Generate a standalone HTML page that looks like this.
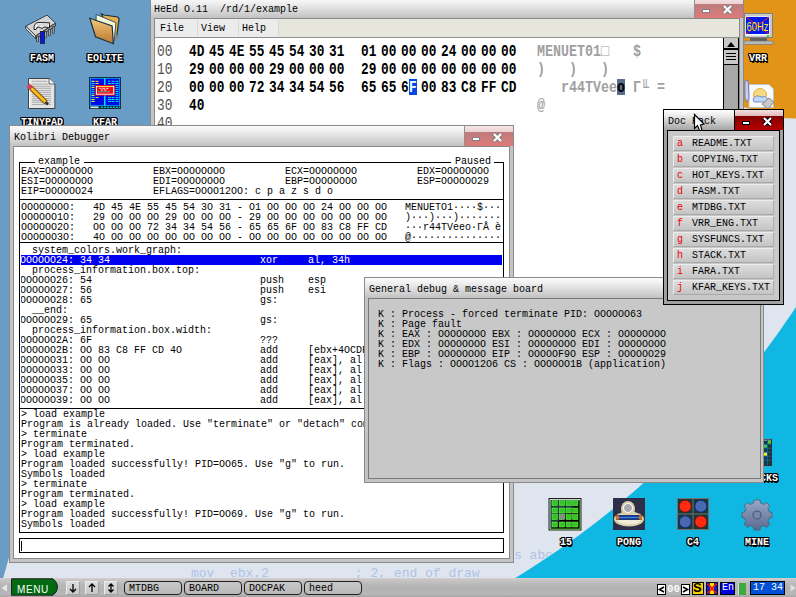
<!DOCTYPE html><html><head><meta charset="utf-8"><style>
html,body{margin:0;padding:0;width:796px;height:597px;overflow:hidden;position:relative;background:#6a9dc6}
div{box-sizing:border-box}
svg{position:absolute;overflow:visible}
.t{position:absolute;white-space:pre;font-family:"Liberation Mono",monospace;font-size:10px;line-height:12px;color:#000}
.lbl{position:absolute;white-space:pre;font-family:"Liberation Mono",monospace;font-weight:bold;font-size:10px;line-height:12px;color:#fff;
 text-shadow:1px 0 0 #000,-1px 0 0 #000,0 1px 0 #000,0 -1px 0 #000,1px 1px 0 #000,-1px -1px 0 #000,1px -1px 0 #000,-1px 1px 0 #000,1px 2px 0 #000}
</style></head><body>
<svg style="left:0;top:0" width="796" height="597" viewBox="0 0 796 597">
<rect x="0" y="0" width="796" height="597" fill="#10b7e3"/>
<circle cx="47.3" cy="-187.5" r="897.3" fill="#dfe5ef"/>
<polygon points="-20,-10 215,-10 160,126 9.4,556 3.5,577 -2,597 -20,597" fill="#6a9dc6"/>
<polygon points="700,-10 900,-10 900,123 783,118 700,95" fill="#e29418"/>
</svg>
<div class="t" style="left:191px;top:567px;font-size:13px;line-height:13px;color:#aec3e6;clip-path:circle(897.3px at -143.7px -754.5px)">mov  ebx,2           ; 2, end of draw</div>
<div class="t" style="left:514px;top:549px;font-size:13px;line-height:13px;color:#aec3e6;clip-path:circle(897.3px at -466.7px -736.5px)">s abo</div>
<svg style="left:22px;top:12px" width="38" height="34" viewBox="0 0 38 34">
<polygon points="3.7,14.2 25,3.1 33.6,11.1 13.7,23.9" fill="#d4d4d4" stroke="#303030" stroke-width="0.9"/>
<polygon points="3.7,14.2 13.7,23.9 13.7,26.5 3.7,16.8" fill="#f4f4f4" stroke="#303030" stroke-width="0.9"/>
<polygon points="13.7,23.9 33.6,11.1 33.6,14 13.7,26.5" fill="#9a9a9a" stroke="#303030" stroke-width="0.9"/>
<path d="M15.6 25 V29 M19.5 23 V27 M23.4 20.5 V25 M27.4 18 V23 M31.3 15.5 V20.5" stroke="#303030" stroke-width="2.6" stroke-linecap="round"/>
<path d="M15.6 25 V29 M19.5 23 V27 M23.4 20.5 V25 M27.4 18 V23 M31.3 15.5 V20.5" stroke="#a8a8a8" stroke-width="1.2" stroke-linecap="round"/>
<path d="M12 17.5 Q11.5 10.5 17 10.5 L27.5 10.8 L27.5 15.5 L22 15 L20 16.5 L17 15 Q14.5 14.5 14 17.5 Z" fill="#f4f4f4" stroke="#202020" stroke-width="1"/><path d="M15 13 L26 13" stroke="#b0b0b0" stroke-width="0.8"/>
<rect x="18.5" y="19.5" width="4" height="12" fill="#0818e8" stroke="#202020" stroke-width="0.8"/>
</svg>
<div class="lbl" style="left:-18px;top:53px;width:120px;text-align:center;font-size:10px">FASM</div>
<svg style="left:86px;top:10px" width="38" height="38" viewBox="0 0 38 38">
<path d="M15.3 3.8 L18 5 L31.8 7 L33.1 8.9 L30.6 26.7 L27 29 Z" fill="#e8b050" stroke="#183040" stroke-width="1.2"/>
<path d="M10.2 4.5 L29.9 12.7 L28 31.8 L10 24 Z" fill="#fafaf0" stroke="#183040" stroke-width="0.8"/>
<path d="M11 8 L29 15" stroke="#e8f8a0" stroke-width="1.2"/>
<path d="M28.6 24.2 L34.4 27 L29 30 Z" fill="#8a8a8a"/>
<defs><linearGradient id="fg" x1="0" y1="0" x2="0" y2="1"><stop offset="0" stop-color="#f4c878"/><stop offset="1" stop-color="#b87830"/></linearGradient></defs>
<path d="M3.8 8.3 L26.1 15.9 L27.4 33.7 L9.5 26.7 Z" fill="url(#fg)" stroke="#183040" stroke-width="1.2"/>
</svg>
<div class="lbl" style="left:45px;top:53px;width:120px;text-align:center;font-size:10px">EOLITE</div>
<svg style="left:24px;top:74px" width="36" height="38" viewBox="0 0 36 38">
<path d="M4.5 4.5 H25.1 L30.9 10 V34.5 H4.5 Z" fill="#e4e4e4" stroke="#404040" stroke-width="1"/>
<path d="M25.1 4.5 V10 H30.9" fill="#fafafa" stroke="#404040" stroke-width="0.8"/>
<path d="M5.5 5 V34" stroke="#fff" stroke-width="1"/>
<path d="M8 7.3 H23 M8 10.2 H24 M8 12.4 H27 M8 14.3 H27 M8 16.5 H27 M8 18.4 H27 M8 20.4 H27 M8 22.3 H27 M8 24.5 H27 M8 26.4 H27 M8 28.3 H27 M8 30.5 H27" stroke="#a8a8a8" stroke-width="0.9"/>
<path d="M5.5 12.5 L22 28.5" stroke="#8a4a00" stroke-width="5"/>
<path d="M5.5 12.5 L22 28.5" stroke="#f8c020" stroke-width="3"/>
<path d="M4 11 L7.5 14.5" stroke="#d84060" stroke-width="4.5"/>
<path d="M21.5 28 L24 30.5" stroke="#303030" stroke-width="2.5"/>
</svg>
<div class="lbl" style="left:-18px;top:117px;width:120px;text-align:center;font-size:10px">TINYPAD</div>
<svg style="left:89px;top:77px" width="32" height="32" viewBox="0 0 32 32">
<rect x="0" y="0" width="32" height="32" fill="#103040"/>
<rect x="1" y="1" width="30" height="28" fill="#00e0f0"/>
<rect x="1.6" y="1.6" width="13.4" height="26.8" fill="#0008e8"/>
<rect x="16.5" y="1.6" width="13.9" height="26.8" fill="#0008e8"/>
<path d="M2.5 4.3h3M2.5 6.5h3M2.5 8.5h3M2.5 10.4h3M2.5 12.6h3M2.5 14.5h3M2.5 16.4h3M2.5 18.3h3M2.5 20.6h3M2.5 22.5h3M2.5 24.4h3" stroke="#00e0f0" stroke-width="1" />
<path d="M2.5 4.3h3M6.5 4.3h3M6.5 6.5h3M2.5 10.4h3M2.5 18.3h3M6.5 20.6h3M2.5 22.5h3M2.5 24.4h3" stroke="#f8e020" stroke-width="1"/>
<path d="M19 4.3h2M22.5 4.3h3M26.5 4.3h3M19 6.5h3M22.5 6.5h3M26.5 6.5h3M26.5 8.5h3M26.5 10.4h3M26.5 12.6h3M26.5 14.5h3M26.5 16.4h3M26.5 18.3h3M19 20.6h3M22.5 20.6h3M26.5 20.6h3M19 22.5h3M22.5 22.5h3M26.5 22.5h3M19 24.4h3M22.5 24.4h3M26.5 24.4h3" stroke="#00e0f0" stroke-width="1"/>
<rect x="6.2" y="8.1" width="19.8" height="10.5" fill="#f01010"/>
<rect x="7.5" y="9.5" width="17.2" height="7.7" fill="none" stroke="#fff" stroke-width="0.9"/>
<path d="M8 9.5h16" stroke="#f8d020" stroke-width="0.8"/>
<path d="M10.5 11.3h2M13.5 11.3h2.5M17 11.3h2.5M12 13h2M15 13h2.5M9.5 14.7h3M13.5 14.7h3M17.5 14.7h3" stroke="#fff" stroke-width="0.9"/>
<path d="M9.5 14.7h3M13.5 14.7h3M17.5 14.7h3" stroke="#207070" stroke-width="0.9"/>
<rect x="1" y="29" width="30" height="2.5" fill="#103040"/>
<path d="M12 30.3h19" stroke="#00e0f0" stroke-dasharray="2,1" stroke-width="1"/>
<path d="M1.5 30.3h8" stroke="#e0f0f0" stroke-width="1.6"/>
</svg>
<div class="lbl" style="left:45px;top:117px;width:120px;text-align:center;font-size:10px">KFAR</div>
<svg style="left:744px;top:13px" width="30" height="32" viewBox="0 0 30 32">
<rect x="0.5" y="0.5" width="28" height="24" fill="#c8c8c8" stroke="#808080"/>
<rect x="1.5" y="3.5" width="24" height="19" fill="#fff"/>
<rect x="2" y="4" width="23" height="17" fill="#0018f0"/>
<path d="M2 4 L25 21 M25 4 L2 21" stroke="#f02020" stroke-width="1"/>
<text x="2.5" y="17.5" font-family="Liberation Sans" font-size="12" fill="#f8e820" textLength="22" lengthAdjust="spacingAndGlyphs">60Hz</text>
<rect x="23" y="22" width="2" height="2" fill="#20e020"/>
<rect x="6" y="25" width="17" height="3" fill="#606060"/>
<rect x="0" y="28" width="29" height="3.5" fill="#b8b8b8" stroke="#707070" stroke-width="0.6"/>
</svg>
<div class="lbl" style="left:698px;top:53px;width:120px;text-align:center;font-size:10px">VRR</div>
<svg style="left:744px;top:80px" width="30" height="30" viewBox="0 0 30 30">
<path d="M5 4.5 H25 L29.5 9 V27.5 H5 Z" fill="#fafafa" stroke="#c0c0c0"/>
<circle cx="16" cy="15" r="6.5" fill="#f8d880" stroke="#e0b040"/>
<path d="M9 19 Q12 14 17 17 Q21 15 24 19 L23 22 L10 22 Z" fill="#c0d8f8" stroke="#6080c0" stroke-width="0.8"/>
<path d="M18 24 L25 18 L30 22 L24 29 Z" fill="#c8c8c8" stroke="#888"/>
<path d="M1 1 L4 0.5 L5 18 L3 22 L1 18 Z" fill="#c8d0f8" stroke="#5070d0" stroke-width="0.8"/>
</svg>
<svg style="left:748px;top:439px" width="24" height="27" viewBox="0 0 24 27">
<rect x="0.5" y="0.5" width="23" height="26" fill="#183838" stroke="#402828" stroke-width="1"/>
<path d="M1 1.2 H23" stroke="#d0d0d0" stroke-width="0.8"/>
<path d="M1 5.2h22M1 9.2h22M1 13.2h22M1 17.2h22M1 21.2h22M7.5 1v25M15.5 1v25M19.5 1v25" stroke="#0868b8" stroke-width="0.9"/>
<rect x="20" y="1.7" width="3" height="3" fill="#40d030"/>
<rect x="16" y="5.7" width="3" height="3" fill="#40d030"/>
<rect x="16" y="13.7" width="3" height="3" fill="#f8f020"/>
</svg>
<div class="lbl" style="left:700px;top:473px;width:120px;text-align:center;font-size:10px">BLOCKS</div>
<svg style="left:548px;top:498px" width="34" height="33" viewBox="0 0 34 33">
<rect x="1" y="0.5" width="32" height="31.5" fill="#184038" stroke="#202020"/>
<rect x="2" y="1.5" width="30" height="29.5" fill="none" stroke="#f0f0f0" stroke-width="0.8"/>
<path d="M2.5 31 H32 V2" stroke="#40b020" stroke-width="1"/>
<rect x="4.0" y="2.7" width="5.3" height="5" fill="#30c820" stroke="#80ff60" stroke-width="0.5"/><rect x="11.3" y="2.7" width="5.3" height="5" fill="#30c820" stroke="#80ff60" stroke-width="0.5"/><rect x="18.0" y="2.7" width="5.3" height="5" fill="#30c820" stroke="#80ff60" stroke-width="0.5"/><rect x="24.6" y="2.7" width="5.3" height="5" fill="#30c820" stroke="#80ff60" stroke-width="0.5"/><rect x="4.0" y="10.0" width="5.3" height="5" fill="#30c820" stroke="#80ff60" stroke-width="0.5"/><rect x="11.3" y="10.0" width="5.3" height="5" fill="#30c820" stroke="#80ff60" stroke-width="0.5"/><rect x="18.0" y="10.0" width="5.3" height="5" fill="#30c820" stroke="#80ff60" stroke-width="0.5"/><rect x="24.6" y="10.0" width="5.3" height="5" fill="#30c820" stroke="#80ff60" stroke-width="0.5"/><rect x="4.0" y="16.6" width="5.3" height="5" fill="#30c820" stroke="#80ff60" stroke-width="0.5"/><rect x="11.3" y="16.6" width="5.3" height="5" fill="#888" stroke="#80ff60" stroke-width="0.5"/><rect x="18.0" y="16.6" width="5.3" height="5" fill="#30c820" stroke="#80ff60" stroke-width="0.5"/><rect x="24.6" y="16.6" width="5.3" height="5" fill="#30c820" stroke="#80ff60" stroke-width="0.5"/><rect x="4.0" y="24.0" width="5.3" height="5" fill="#30c820" stroke="#80ff60" stroke-width="0.5"/><rect x="11.3" y="24.0" width="5.3" height="5" fill="#30c820" stroke="#80ff60" stroke-width="0.5"/><rect x="18.0" y="24.0" width="5.3" height="5" fill="#30c820" stroke="#80ff60" stroke-width="0.5"/><rect x="24.6" y="24.0" width="5.3" height="5" fill="#30c820" stroke="#80ff60" stroke-width="0.5"/>
</svg>
<div class="lbl" style="left:506px;top:537px;width:120px;text-align:center;font-size:10px">15</div>
<svg style="left:613px;top:498px" width="32" height="32" viewBox="0 0 32 32">
<rect x="0" y="0" width="32" height="32" fill="#2e2e48"/>
<ellipse cx="16" cy="21" rx="15" ry="7.5" fill="#d8d0a8"/>
<ellipse cx="16" cy="21" rx="12.5" ry="5.5" fill="#f0ecd8"/>
<ellipse cx="15" cy="11" rx="7" ry="8" fill="#d8d0a8"/>
<circle cx="15" cy="10" r="4.5" fill="#a8a8b0" stroke="#fff" stroke-width="1"/>
<rect x="3.5" y="17.5" width="25" height="4" fill="#1840a8" stroke="#102060" stroke-width="0.8"/>
<path d="M5 19.5 H27" stroke="#40a0d0" stroke-width="0.8"/>
<ellipse cx="4.5" cy="19.5" rx="1.8" ry="2.5" fill="#d07020"/><ellipse cx="27.5" cy="19.5" rx="1.8" ry="2.5" fill="#d07020"/>
</svg>
<div class="lbl" style="left:569px;top:537px;width:120px;text-align:center;font-size:10px">PONG</div>
<svg style="left:677px;top:498px" width="33" height="33" viewBox="0 0 33 33">
<rect x="0" y="0" width="32" height="32" fill="#707070"/>
<rect x="1" y="1" width="14.5" height="14.5" fill="#1a3838"/><rect x="16.5" y="1" width="14.5" height="14.5" fill="#1a3838"/>
<rect x="1" y="16.5" width="14.5" height="14.5" fill="#1a3838"/><rect x="16.5" y="16.5" width="14.5" height="14.5" fill="#1a3838"/>
<circle cx="8.2" cy="8.2" r="6" fill="#ff2a10" stroke="#701010" stroke-width="0.8"/><circle cx="23.8" cy="8.2" r="6" fill="#4868b0" stroke="#102080" stroke-width="0.8"/>
<circle cx="8.2" cy="23.8" r="6" fill="#4868b0" stroke="#102080" stroke-width="0.8"/><circle cx="23.8" cy="23.8" r="6" fill="#ff2a10" stroke="#701010" stroke-width="0.8"/>
</svg>
<div class="lbl" style="left:633px;top:537px;width:120px;text-align:center;font-size:10px">C4</div>
<svg style="left:741px;top:499px" width="32" height="32" viewBox="0 0 32 32">
<defs><linearGradient id="gg" x1="0" y1="0" x2="0" y2="1"><stop offset="0" stop-color="#98a8c8"/><stop offset="1" stop-color="#5a6a90"/></linearGradient></defs>
<path d="M13 1 H19 L19.5 4 L23 5.5 L25.5 3.5 L29 7 L27 9.5 L28.5 13 L31 13.5 V18.5 L28.5 19 L27 22.5 L29 25 L25.5 28.5 L23 26.5 L19.5 28 L19 31 H13 L12.5 28 L9 26.5 L6.5 28.5 L3 25 L5 22.5 L3.5 19 L1 18.5 V13.5 L3.5 13 L5 9.5 L3 7 L6.5 3.5 L9 5.5 L12.5 4 Z" fill="url(#gg)" stroke="#505a70" stroke-width="0.8"/>
<circle cx="16" cy="16" r="4" fill="#7888a8" stroke="#48587a" stroke-width="1.2"/>
</svg>
<div class="lbl" style="left:697px;top:537px;width:120px;text-align:center;font-size:10px">MINE</div>
<div style="position:absolute;left:150px;top:-3px;width:594px;height:424px;border:1px solid #8a8a8a;background:#c4c4c4"></div>
<div style="position:absolute;left:151px;top:-2px;width:592px;height:20px;background:linear-gradient(#fbfbfb,#f0f0f0 25%,#c2c2c2)"></div>
<div style="position:absolute;left:694px;top:-2px;width:49px;height:20px;background:linear-gradient(#f6e6e6 0,#ecd2d2 6px,#bc7c7c 6px,#e07a7a);border-left:1px solid #909090"></div>
<div style="position:absolute;left:154px;top:18px;width:586px;height:399px;border:1px solid #888;background:#fff"></div>
<div class="t" style="left:154px;top:4px;">HeEd O.11  /rd/1/example</div>
<div style="position:absolute;left:702px;top:9px;width:8px;height:4px;background:#fff;border:1px solid #808080"></div>
<svg style="left:722px;top:4px" width="11" height="11" viewBox="0 0 11 11"><path d="M2 2 L9 9 M9 2 L2 9" stroke="#808080" stroke-width="4.2"/><path d="M2 2 L9 9 M9 2 L2 9" stroke="#fff" stroke-width="2.2"/></svg>
<div style="position:absolute;left:155px;top:19px;width:584px;height:19px;background:#e6e6dc;border-bottom:1px solid #909090"></div>
<div style="position:absolute;left:155px;top:19px;width:123px;height:18px;background:#ececec"></div>
<div style="position:absolute;left:197px;top:20px;width:1px;height:16px;background:#d8d8d0"></div>
<div style="position:absolute;left:238px;top:20px;width:1px;height:16px;background:#d8d8d0"></div>
<div style="position:absolute;left:278px;top:20px;width:1px;height:16px;background:#d8d8d0"></div>
<div class="t" style="left:160px;top:23px;">File</div>
<div class="t" style="left:201px;top:23px;">View</div>
<div class="t" style="left:242px;top:23px;">Help</div>
<div style="position:absolute;left:155px;top:38px;width:584px;height:378px;background:#fff"></div>
<div style="position:absolute;left:723px;top:38px;width:16px;height:80px;background:#a8a8a8;border-left:1px solid #000;border-right:1px solid #000"></div>
<div style="position:absolute;left:724px;top:38px;width:14px;height:11px;background:#c8c8c8;border-bottom:1px solid #000"></div>
<svg style="left:725px;top:40px" width="12" height="8" viewBox="0 0 12 8"><path d="M2 7 L6 2 L10 7 Z" fill="#000"/></svg>
<div style="position:absolute;left:724px;top:49px;width:14px;height:16px;background:#c8c8c8;border-top:1px solid #000;border-bottom:1px solid #000"></div>
<div style="position:absolute;left:726px;top:53px;width:10px;height:1px;background:#000"></div>
<div style="position:absolute;left:726px;top:56px;width:10px;height:1px;background:#000"></div>
<div style="position:absolute;left:726px;top:59px;width:10px;height:1px;background:#000"></div>
<div class="t" style="left:157px;top:44px;font-family:Liberation Mono,monospace;font-weight:bold;font-size:16px;line-height:16px;transform:scaleX(0.8);transform-origin:0 0;font-weight:normal;color:#505050">00</div>
<div class="t" style="left:189px;top:44px;font-family:Liberation Mono,monospace;font-weight:bold;font-size:16px;line-height:16px;transform:scaleX(0.8);transform-origin:0 0;">4D</div>
<div class="t" style="left:209px;top:44px;font-family:Liberation Mono,monospace;font-weight:bold;font-size:16px;line-height:16px;transform:scaleX(0.8);transform-origin:0 0;">45</div>
<div class="t" style="left:229px;top:44px;font-family:Liberation Mono,monospace;font-weight:bold;font-size:16px;line-height:16px;transform:scaleX(0.8);transform-origin:0 0;">4E</div>
<div class="t" style="left:249px;top:44px;font-family:Liberation Mono,monospace;font-weight:bold;font-size:16px;line-height:16px;transform:scaleX(0.8);transform-origin:0 0;">55</div>
<div class="t" style="left:269px;top:44px;font-family:Liberation Mono,monospace;font-weight:bold;font-size:16px;line-height:16px;transform:scaleX(0.8);transform-origin:0 0;">45</div>
<div class="t" style="left:289px;top:44px;font-family:Liberation Mono,monospace;font-weight:bold;font-size:16px;line-height:16px;transform:scaleX(0.8);transform-origin:0 0;">54</div>
<div class="t" style="left:309px;top:44px;font-family:Liberation Mono,monospace;font-weight:bold;font-size:16px;line-height:16px;transform:scaleX(0.8);transform-origin:0 0;">30</div>
<div class="t" style="left:329px;top:44px;font-family:Liberation Mono,monospace;font-weight:bold;font-size:16px;line-height:16px;transform:scaleX(0.8);transform-origin:0 0;">31</div>
<div class="t" style="left:361px;top:44px;font-family:Liberation Mono,monospace;font-weight:bold;font-size:16px;line-height:16px;transform:scaleX(0.8);transform-origin:0 0;">01</div>
<div class="t" style="left:381px;top:44px;font-family:Liberation Mono,monospace;font-weight:bold;font-size:16px;line-height:16px;transform:scaleX(0.8);transform-origin:0 0;">00</div>
<div class="t" style="left:401px;top:44px;font-family:Liberation Mono,monospace;font-weight:bold;font-size:16px;line-height:16px;transform:scaleX(0.8);transform-origin:0 0;">00</div>
<div class="t" style="left:421px;top:44px;font-family:Liberation Mono,monospace;font-weight:bold;font-size:16px;line-height:16px;transform:scaleX(0.8);transform-origin:0 0;">00</div>
<div class="t" style="left:441px;top:44px;font-family:Liberation Mono,monospace;font-weight:bold;font-size:16px;line-height:16px;transform:scaleX(0.8);transform-origin:0 0;">24</div>
<div class="t" style="left:461px;top:44px;font-family:Liberation Mono,monospace;font-weight:bold;font-size:16px;line-height:16px;transform:scaleX(0.8);transform-origin:0 0;">00</div>
<div class="t" style="left:481px;top:44px;font-family:Liberation Mono,monospace;font-weight:bold;font-size:16px;line-height:16px;transform:scaleX(0.8);transform-origin:0 0;">00</div>
<div class="t" style="left:501px;top:44px;font-family:Liberation Mono,monospace;font-weight:bold;font-size:16px;line-height:16px;transform:scaleX(0.8);transform-origin:0 0;">00</div>
<div class="t" style="left:537px;top:44px;font-family:Liberation Mono,monospace;font-weight:bold;font-size:16px;line-height:16px;transform:scaleX(0.8);transform-origin:0 0;color:#a0a0a0;transform:scaleX(0.833)">MENUET01□   $</div>
<div class="t" style="left:157px;top:62px;font-family:Liberation Mono,monospace;font-weight:bold;font-size:16px;line-height:16px;transform:scaleX(0.8);transform-origin:0 0;font-weight:normal;color:#505050">10</div>
<div class="t" style="left:189px;top:62px;font-family:Liberation Mono,monospace;font-weight:bold;font-size:16px;line-height:16px;transform:scaleX(0.8);transform-origin:0 0;">29</div>
<div class="t" style="left:209px;top:62px;font-family:Liberation Mono,monospace;font-weight:bold;font-size:16px;line-height:16px;transform:scaleX(0.8);transform-origin:0 0;">00</div>
<div class="t" style="left:229px;top:62px;font-family:Liberation Mono,monospace;font-weight:bold;font-size:16px;line-height:16px;transform:scaleX(0.8);transform-origin:0 0;">00</div>
<div class="t" style="left:249px;top:62px;font-family:Liberation Mono,monospace;font-weight:bold;font-size:16px;line-height:16px;transform:scaleX(0.8);transform-origin:0 0;">00</div>
<div class="t" style="left:269px;top:62px;font-family:Liberation Mono,monospace;font-weight:bold;font-size:16px;line-height:16px;transform:scaleX(0.8);transform-origin:0 0;">29</div>
<div class="t" style="left:289px;top:62px;font-family:Liberation Mono,monospace;font-weight:bold;font-size:16px;line-height:16px;transform:scaleX(0.8);transform-origin:0 0;">00</div>
<div class="t" style="left:309px;top:62px;font-family:Liberation Mono,monospace;font-weight:bold;font-size:16px;line-height:16px;transform:scaleX(0.8);transform-origin:0 0;">00</div>
<div class="t" style="left:329px;top:62px;font-family:Liberation Mono,monospace;font-weight:bold;font-size:16px;line-height:16px;transform:scaleX(0.8);transform-origin:0 0;">00</div>
<div class="t" style="left:361px;top:62px;font-family:Liberation Mono,monospace;font-weight:bold;font-size:16px;line-height:16px;transform:scaleX(0.8);transform-origin:0 0;">29</div>
<div class="t" style="left:381px;top:62px;font-family:Liberation Mono,monospace;font-weight:bold;font-size:16px;line-height:16px;transform:scaleX(0.8);transform-origin:0 0;">00</div>
<div class="t" style="left:401px;top:62px;font-family:Liberation Mono,monospace;font-weight:bold;font-size:16px;line-height:16px;transform:scaleX(0.8);transform-origin:0 0;">00</div>
<div class="t" style="left:421px;top:62px;font-family:Liberation Mono,monospace;font-weight:bold;font-size:16px;line-height:16px;transform:scaleX(0.8);transform-origin:0 0;">00</div>
<div class="t" style="left:441px;top:62px;font-family:Liberation Mono,monospace;font-weight:bold;font-size:16px;line-height:16px;transform:scaleX(0.8);transform-origin:0 0;">00</div>
<div class="t" style="left:461px;top:62px;font-family:Liberation Mono,monospace;font-weight:bold;font-size:16px;line-height:16px;transform:scaleX(0.8);transform-origin:0 0;">00</div>
<div class="t" style="left:481px;top:62px;font-family:Liberation Mono,monospace;font-weight:bold;font-size:16px;line-height:16px;transform:scaleX(0.8);transform-origin:0 0;">00</div>
<div class="t" style="left:501px;top:62px;font-family:Liberation Mono,monospace;font-weight:bold;font-size:16px;line-height:16px;transform:scaleX(0.8);transform-origin:0 0;">00</div>
<div class="t" style="left:537px;top:62px;font-family:Liberation Mono,monospace;font-weight:bold;font-size:16px;line-height:16px;transform:scaleX(0.8);transform-origin:0 0;color:#a0a0a0;transform:scaleX(0.833)">)   )   )</div>
<div class="t" style="left:157px;top:80px;font-family:Liberation Mono,monospace;font-weight:bold;font-size:16px;line-height:16px;transform:scaleX(0.8);transform-origin:0 0;font-weight:normal;color:#505050">20</div>
<div class="t" style="left:189px;top:80px;font-family:Liberation Mono,monospace;font-weight:bold;font-size:16px;line-height:16px;transform:scaleX(0.8);transform-origin:0 0;">00</div>
<div class="t" style="left:209px;top:80px;font-family:Liberation Mono,monospace;font-weight:bold;font-size:16px;line-height:16px;transform:scaleX(0.8);transform-origin:0 0;">00</div>
<div class="t" style="left:229px;top:80px;font-family:Liberation Mono,monospace;font-weight:bold;font-size:16px;line-height:16px;transform:scaleX(0.8);transform-origin:0 0;">00</div>
<div class="t" style="left:249px;top:80px;font-family:Liberation Mono,monospace;font-weight:bold;font-size:16px;line-height:16px;transform:scaleX(0.8);transform-origin:0 0;">72</div>
<div class="t" style="left:269px;top:80px;font-family:Liberation Mono,monospace;font-weight:bold;font-size:16px;line-height:16px;transform:scaleX(0.8);transform-origin:0 0;">34</div>
<div class="t" style="left:289px;top:80px;font-family:Liberation Mono,monospace;font-weight:bold;font-size:16px;line-height:16px;transform:scaleX(0.8);transform-origin:0 0;">34</div>
<div class="t" style="left:309px;top:80px;font-family:Liberation Mono,monospace;font-weight:bold;font-size:16px;line-height:16px;transform:scaleX(0.8);transform-origin:0 0;">54</div>
<div class="t" style="left:329px;top:80px;font-family:Liberation Mono,monospace;font-weight:bold;font-size:16px;line-height:16px;transform:scaleX(0.8);transform-origin:0 0;">56</div>
<div class="t" style="left:361px;top:80px;font-family:Liberation Mono,monospace;font-weight:bold;font-size:16px;line-height:16px;transform:scaleX(0.8);transform-origin:0 0;">65</div>
<div class="t" style="left:381px;top:80px;font-family:Liberation Mono,monospace;font-weight:bold;font-size:16px;line-height:16px;transform:scaleX(0.8);transform-origin:0 0;">65</div>
<div class="t" style="left:401px;top:80px;font-family:Liberation Mono,monospace;font-weight:bold;font-size:16px;line-height:16px;transform:scaleX(0.8);transform-origin:0 0;">6F</div>
<div class="t" style="left:421px;top:80px;font-family:Liberation Mono,monospace;font-weight:bold;font-size:16px;line-height:16px;transform:scaleX(0.8);transform-origin:0 0;">00</div>
<div class="t" style="left:441px;top:80px;font-family:Liberation Mono,monospace;font-weight:bold;font-size:16px;line-height:16px;transform:scaleX(0.8);transform-origin:0 0;">83</div>
<div class="t" style="left:461px;top:80px;font-family:Liberation Mono,monospace;font-weight:bold;font-size:16px;line-height:16px;transform:scaleX(0.8);transform-origin:0 0;">C8</div>
<div class="t" style="left:481px;top:80px;font-family:Liberation Mono,monospace;font-weight:bold;font-size:16px;line-height:16px;transform:scaleX(0.8);transform-origin:0 0;">FF</div>
<div class="t" style="left:501px;top:80px;font-family:Liberation Mono,monospace;font-weight:bold;font-size:16px;line-height:16px;transform:scaleX(0.8);transform-origin:0 0;">CD</div>
<div class="t" style="left:537px;top:80px;font-family:Liberation Mono,monospace;font-weight:bold;font-size:16px;line-height:16px;transform:scaleX(0.8);transform-origin:0 0;color:#a0a0a0;transform:scaleX(0.833)">   r44TVeeo Г╙ =</div>
<div class="t" style="left:157px;top:98px;font-family:Liberation Mono,monospace;font-weight:bold;font-size:16px;line-height:16px;transform:scaleX(0.8);transform-origin:0 0;font-weight:normal;color:#505050">30</div>
<div class="t" style="left:189px;top:98px;font-family:Liberation Mono,monospace;font-weight:bold;font-size:16px;line-height:16px;transform:scaleX(0.8);transform-origin:0 0;">40</div>
<div class="t" style="left:537px;top:98px;font-family:Liberation Mono,monospace;font-weight:bold;font-size:16px;line-height:16px;transform:scaleX(0.8);transform-origin:0 0;color:#a0a0a0;transform:scaleX(0.833)">@</div>
<div class="t" style="left:157px;top:116px;font-family:Liberation Mono,monospace;font-weight:bold;font-size:16px;line-height:16px;transform:scaleX(0.8);transform-origin:0 0;font-weight:normal;color:#505050">40</div>
<div style="position:absolute;left:409px;top:79px;width:8px;height:16px;background:#0048e0"></div>
<div class="t" style="left:409px;top:80px;font-family:Liberation Mono,monospace;font-weight:bold;font-size:16px;line-height:16px;transform:scaleX(0.8);transform-origin:0 0;color:#fff">F</div>
<div style="position:absolute;left:617px;top:79px;width:8px;height:16px;background:#5a6e8c"></div>
<div class="t" style="left:617px;top:80px;font-family:Liberation Mono,monospace;font-weight:bold;font-size:16px;line-height:16px;transform:scaleX(0.8);transform-origin:0 0;color:#000;transform:scaleX(0.833)">o</div>
<div style="position:absolute;left:9px;top:125px;width:505px;height:438px;border:1px solid #8a8a8a;background:#c4c4c4"></div>
<div style="position:absolute;left:10px;top:126px;width:503px;height:20px;background:linear-gradient(#fbfbfb,#f0f0f0 25%,#c2c2c2)"></div>
<div style="position:absolute;left:464px;top:126px;width:49px;height:20px;background:linear-gradient(#f6e6e6 0,#ecd2d2 6px,#bc7c7c 6px,#e07a7a);border-left:1px solid #909090"></div>
<div style="position:absolute;left:13px;top:146px;width:497px;height:413px;border:1px solid #888;background:#fff"></div>
<div class="t" style="left:14px;top:132px;">Kolibri Debugger</div>
<div style="position:absolute;left:472px;top:137px;width:8px;height:4px;background:#fff;border:1px solid #808080"></div>
<svg style="left:492px;top:132px" width="11" height="11" viewBox="0 0 11 11"><path d="M2 2 L9 9 M9 2 L2 9" stroke="#808080" stroke-width="4.2"/><path d="M2 2 L9 9 M9 2 L2 9" stroke="#fff" stroke-width="2.2"/></svg>
<div style="position:absolute;left:19px;top:162px;width:1px;height:371px;background:#000"></div>
<div style="position:absolute;left:503px;top:162px;width:1px;height:371px;background:#000"></div>
<div style="position:absolute;left:19px;top:162px;width:16px;height:1px;background:#000"></div>
<div style="position:absolute;left:84px;top:162px;width:367px;height:1px;background:#000"></div>
<div style="position:absolute;left:494px;top:162px;width:10px;height:1px;background:#000"></div>
<div style="position:absolute;left:19px;top:199px;width:485px;height:1px;background:#000"></div>
<div style="position:absolute;left:19px;top:242px;width:485px;height:1px;background:#000"></div>
<div style="position:absolute;left:19px;top:408px;width:485px;height:1px;background:#000"></div>
<div style="position:absolute;left:19px;top:532px;width:485px;height:1px;background:#000"></div>
<div class="t" style="left:38px;top:156px;">example</div>
<div class="t" style="left:455px;top:156px;">Paused</div>
<div style="position:absolute;left:19px;top:538px;width:485px;height:15px;border:1px solid #000;background:#fff"></div>
<div style="position:absolute;left:21px;top:541px;width:1px;height:10px;background:#000"></div>
<div class="t" style="left:21px;top:166px;">EAX=OOOOOOOO          EBX=OOOOOOOO          ECX=OOOOOOOO          EDX=OOOOOOOO</div>
<div class="t" style="left:21px;top:176px;">ESI=OOOOOOOO          EDI=OOOOOOOO          EBP=OOOOOOOO          ESP=OOOOOO29</div>
<div class="t" style="left:21px;top:186px;">EIP=OOOOOO24          EFLAGS=OOOO12OO: c p a z s d o</div>
<div class="t" style="left:21px;top:202px;">OOOOOOOO:   4D 45 4E 55 45 54 3O 31 - O1 OO OO OO 24 OO OO OO   MENUETO1····$···</div>
<div class="t" style="left:21px;top:212px;">OOOOOO1O:   29 OO OO OO 29 OO OO OO - 29 OO OO OO OO OO OO OO   )···)···)·······</div>
<div class="t" style="left:21px;top:222px;">OOOOOO2O:   OO OO OO 72 34 34 54 56 - 65 65 6F OO 83 C8 FF CD   ···r44TVeeo·ГÅ è</div>
<div class="t" style="left:21px;top:232px;">OOOOOO3O:   4O OO OO OO OO OO OO OO - OO OO OO OO OO OO OO OO   @···············</div>
<div style="position:absolute;left:21px;top:243px;width:482px;height:165px;overflow:hidden">
<div style="position:absolute;left:0px;top:12px;width:481px;height:10px;background:#0000f0"></div>
<div class="t" style="left:-1px;top:2px;color:#000">  system_colors.work_graph:</div>
<div class="t" style="left:-1px;top:12px;color:#fff">OOOOOO24: 34 34                         xor     al, 34h</div>
<div class="t" style="left:-1px;top:22px;color:#000">  process_information.box.top:</div>
<div class="t" style="left:-1px;top:32px;color:#000">OOOOOO26: 54                            push    esp</div>
<div class="t" style="left:-1px;top:42px;color:#000">OOOOOO27: 56                            push    esi</div>
<div class="t" style="left:-1px;top:52px;color:#000">OOOOOO28: 65                            gs:</div>
<div class="t" style="left:-1px;top:62px;color:#000">  __end:</div>
<div class="t" style="left:-1px;top:72px;color:#000">OOOOOO29: 65                            gs:</div>
<div class="t" style="left:-1px;top:82px;color:#000">  process_information.box.width:</div>
<div class="t" style="left:-1px;top:92px;color:#000">OOOOOO2A: 6F                            ???</div>
<div class="t" style="left:-1px;top:102px;color:#000">OOOOOO2B: OO 83 C8 FF CD 4O             add     [ebx+4OCDFFC8h],dl</div>
<div class="t" style="left:-1px;top:112px;color:#000">OOOOOO31: OO OO                         add     [eax], al</div>
<div class="t" style="left:-1px;top:122px;color:#000">OOOOOO33: OO OO                         add     [eax], al</div>
<div class="t" style="left:-1px;top:132px;color:#000">OOOOOO35: OO OO                         add     [eax], al</div>
<div class="t" style="left:-1px;top:142px;color:#000">OOOOOO37: OO OO                         add     [eax], al</div>
<div class="t" style="left:-1px;top:152px;color:#000">OOOOOO39: OO OO                         add     [eax], al</div>
</div>
<div class="t" style="left:21px;top:409px;">&gt; load example</div>
<div class="t" style="left:21px;top:419px;">Program is already loaded. Use &quot;terminate&quot; or &quot;detach&quot; commands</div>
<div class="t" style="left:21px;top:429px;">&gt; terminate</div>
<div class="t" style="left:21px;top:439px;">Program terminated.</div>
<div class="t" style="left:21px;top:449px;">&gt; load example</div>
<div class="t" style="left:21px;top:459px;">Program loaded successfully! PID=OO65. Use &quot;g&quot; to run.</div>
<div class="t" style="left:21px;top:469px;">Symbols loaded</div>
<div class="t" style="left:21px;top:479px;">&gt; terminate</div>
<div class="t" style="left:21px;top:489px;">Program terminated.</div>
<div class="t" style="left:21px;top:499px;">&gt; load example</div>
<div class="t" style="left:21px;top:509px;">Program loaded successfully! PID=OO69. Use &quot;g&quot; to run.</div>
<div class="t" style="left:21px;top:519px;">Symbols loaded</div>
<div style="position:absolute;left:364px;top:277px;width:400px;height:206px;border:1px solid #8a8a8a;background:#c4c4c4"></div>
<div style="position:absolute;left:365px;top:278px;width:398px;height:20px;background:linear-gradient(#fbfbfb,#f0f0f0 25%,#c2c2c2)"></div>
<div style="position:absolute;left:714px;top:278px;width:49px;height:20px;background:linear-gradient(#f6e6e6 0,#ecd2d2 6px,#bc7c7c 6px,#e07a7a);border-left:1px solid #909090"></div>
<div style="position:absolute;left:368px;top:298px;width:393px;height:181px;border:1px solid #7a7a7a;background:#c8c8c8"></div>
<div class="t" style="left:369px;top:284px;">General debug &amp; message board</div>
<div class="t" style="left:378px;top:309px;">K : Process - forced terminate PID: OOOOOO63</div>
<div class="t" style="left:378px;top:319px;">K : Page fault</div>
<div class="t" style="left:378px;top:329px;">K : EAX : OOOOOOOO EBX : OOOOOOOO ECX : OOOOOOOO</div>
<div class="t" style="left:378px;top:339px;">K : EDX : OOOOOOOO ESI : OOOOOOOO EDI : OOOOOOOO</div>
<div class="t" style="left:378px;top:349px;">K : EBP : OOOOOOOO EIP : OOOOOF9O ESP : OOOOOO29</div>
<div class="t" style="left:378px;top:359px;">K : Flags : OOOO12O6 CS : OOOOOO1B (application)</div>
<div style="position:absolute;left:663px;top:109px;width:121px;height:196px;border:1px solid #000;background:#a0a0a0"></div>
<div style="position:absolute;left:664px;top:110px;width:119px;height:20px;background:linear-gradient(#fdfdfd,#eeeeee 25%,#a4a4a4)"></div>
<div style="position:absolute;left:734px;top:110px;width:49px;height:20px;background:linear-gradient(#f4dede 0,#e0b8b8 6px,#800000 6px,#b80000);border-left:1px solid #000"></div>
<div style="position:absolute;left:667px;top:130px;width:113px;height:171px;border:1px solid #000;background:#c8c8c8"></div>
<div class="t" style="left:668px;top:116px;">Doc Pack</div>
<div style="position:absolute;left:742px;top:121px;width:8px;height:4px;background:#fff;border:1px solid #000"></div>
<svg style="left:762px;top:116px" width="11" height="11" viewBox="0 0 11 11"><path d="M2 2 L9 9 M9 2 L2 9" stroke="#000" stroke-width="4.2"/><path d="M2 2 L9 9 M9 2 L2 9" stroke="#fff" stroke-width="2.2"/></svg>
<div style="position:absolute;left:673px;top:136px;width:101px;height:15px;background:linear-gradient(#dcdcdc,#c4c4c4);border-top:1px solid #ececec;border-left:1px solid #ececec;border-bottom:1px solid #a8a8a8;border-right:1px solid #b0b0b0"></div>
<div class="t" style="left:677px;top:138px;color:#f00000">a</div>
<div class="t" style="left:692px;top:138px;">README.TXT</div>
<div style="position:absolute;left:673px;top:152px;width:101px;height:15px;background:linear-gradient(#dcdcdc,#c4c4c4);border-top:1px solid #ececec;border-left:1px solid #ececec;border-bottom:1px solid #a8a8a8;border-right:1px solid #b0b0b0"></div>
<div class="t" style="left:677px;top:154px;color:#f00000">b</div>
<div class="t" style="left:692px;top:154px;">COPYING.TXT</div>
<div style="position:absolute;left:673px;top:168px;width:101px;height:15px;background:linear-gradient(#dcdcdc,#c4c4c4);border-top:1px solid #ececec;border-left:1px solid #ececec;border-bottom:1px solid #a8a8a8;border-right:1px solid #b0b0b0"></div>
<div class="t" style="left:677px;top:170px;color:#f00000">c</div>
<div class="t" style="left:692px;top:170px;">HOT_KEYS.TXT</div>
<div style="position:absolute;left:673px;top:184px;width:101px;height:15px;background:linear-gradient(#dcdcdc,#c4c4c4);border-top:1px solid #ececec;border-left:1px solid #ececec;border-bottom:1px solid #a8a8a8;border-right:1px solid #b0b0b0"></div>
<div class="t" style="left:677px;top:186px;color:#f00000">d</div>
<div class="t" style="left:692px;top:186px;">FASM.TXT</div>
<div style="position:absolute;left:673px;top:200px;width:101px;height:15px;background:linear-gradient(#dcdcdc,#c4c4c4);border-top:1px solid #ececec;border-left:1px solid #ececec;border-bottom:1px solid #a8a8a8;border-right:1px solid #b0b0b0"></div>
<div class="t" style="left:677px;top:202px;color:#f00000">e</div>
<div class="t" style="left:692px;top:202px;">MTDBG.TXT</div>
<div style="position:absolute;left:673px;top:216px;width:101px;height:15px;background:linear-gradient(#dcdcdc,#c4c4c4);border-top:1px solid #ececec;border-left:1px solid #ececec;border-bottom:1px solid #a8a8a8;border-right:1px solid #b0b0b0"></div>
<div class="t" style="left:677px;top:218px;color:#f00000">f</div>
<div class="t" style="left:692px;top:218px;">VRR_ENG.TXT</div>
<div style="position:absolute;left:673px;top:232px;width:101px;height:15px;background:linear-gradient(#dcdcdc,#c4c4c4);border-top:1px solid #ececec;border-left:1px solid #ececec;border-bottom:1px solid #a8a8a8;border-right:1px solid #b0b0b0"></div>
<div class="t" style="left:677px;top:234px;color:#f00000">g</div>
<div class="t" style="left:692px;top:234px;">SYSFUNCS.TXT</div>
<div style="position:absolute;left:673px;top:248px;width:101px;height:15px;background:linear-gradient(#dcdcdc,#c4c4c4);border-top:1px solid #ececec;border-left:1px solid #ececec;border-bottom:1px solid #a8a8a8;border-right:1px solid #b0b0b0"></div>
<div class="t" style="left:677px;top:250px;color:#f00000">h</div>
<div class="t" style="left:692px;top:250px;">STACK.TXT</div>
<div style="position:absolute;left:673px;top:264px;width:101px;height:15px;background:linear-gradient(#dcdcdc,#c4c4c4);border-top:1px solid #ececec;border-left:1px solid #ececec;border-bottom:1px solid #a8a8a8;border-right:1px solid #b0b0b0"></div>
<div class="t" style="left:677px;top:266px;color:#f00000">i</div>
<div class="t" style="left:692px;top:266px;">FARA.TXT</div>
<div style="position:absolute;left:673px;top:280px;width:101px;height:15px;background:linear-gradient(#dcdcdc,#c4c4c4);border-top:1px solid #ececec;border-left:1px solid #ececec;border-bottom:1px solid #a8a8a8;border-right:1px solid #b0b0b0"></div>
<div class="t" style="left:677px;top:282px;color:#f00000">j</div>
<div class="t" style="left:692px;top:282px;">KFAR_KEYS.TXT</div>
<svg style="left:693px;top:113px" width="14" height="19" viewBox="0 0 14 19">
<path d="M1.5 1.5 L1.5 15.5 L4.5 12.5 L6.5 17.5 L9 17.5 L7.5 12 L11 11 Z" fill="#fff" stroke="#000" stroke-width="1.2" stroke-linejoin="miter"/>
</svg>
<div style="position:absolute;left:0px;top:578px;width:796px;height:19px;background:linear-gradient(#d8cccc 0,#d4cccc 1px,#c8c8c8 1px,#b6b6b6 40%,#b3b3b3 65%,#b8b8b8 82%,#a6a6a6 100%)"></div>
<svg style="left:1px;top:584px" width="7" height="8" viewBox="0 0 7 8"><path d="M6 0.5 L0.5 4 L6 7.5 Z" fill="#e8e8e8"/></svg>
<svg style="left:11px;top:578px" width="48" height="18" viewBox="0 0 48 18"><path d="M0.5 0.8 H42 Q46.5 4 46.5 9 Q46.5 14 42 17.2 H0.5 Z" fill="#006b12" stroke="#202020" stroke-width="1"/></svg>
<div class="t" style="left:17px;top:583.5px;font-family:Liberation Sans,sans-serif;font-size:10px;line-height:12px;color:#fff;letter-spacing:0.6px">MENU</div>
<div style="position:absolute;left:66px;top:581px;width:14px;height:14px;background:linear-gradient(#dcdcdc,#c8c8c8);border-top:1px solid #ececec;border-left:1px solid #ececec;border-right:1px solid #a0a0a0;border-bottom:1px solid #a0a0a0"></div>
<svg style="left:66px;top:581px" width="14" height="14" viewBox="0 0 14 14"><path d="M7 3 V11 M4 8 L7 11 L10 8" stroke="#000" stroke-width="1.3" fill="none"/></svg>
<div style="position:absolute;left:85px;top:581px;width:14px;height:14px;background:linear-gradient(#dcdcdc,#c8c8c8);border-top:1px solid #ececec;border-left:1px solid #ececec;border-right:1px solid #a0a0a0;border-bottom:1px solid #a0a0a0"></div>
<svg style="left:85px;top:581px" width="14" height="14" viewBox="0 0 14 14"><path d="M7 11 V3 M4 6 L7 3 L10 6" stroke="#000" stroke-width="1.3" fill="none"/></svg>
<div style="position:absolute;left:104px;top:581px;width:14px;height:14px;background:linear-gradient(#dcdcdc,#c8c8c8);border-top:1px solid #ececec;border-left:1px solid #ececec;border-right:1px solid #a0a0a0;border-bottom:1px solid #a0a0a0"></div>
<svg style="left:104px;top:581px" width="14" height="14" viewBox="0 0 14 14"><path d="M7 3 V11 M4.5 5.5 L7 3 L9.5 5.5 M4.5 8.5 L7 11 L9.5 8.5" stroke="#000" stroke-width="1.3" fill="none"/></svg>
<div style="position:absolute;left:124px;top:581px;width:58px;height:14px;border:1px solid #202020;border-radius:4px;background:linear-gradient(#c8c8c8,#b8b8b8)"></div>
<div class="t" style="left:129px;top:583px;">MTDBG</div>
<div style="position:absolute;left:184px;top:581px;width:58px;height:14px;border:1px solid #202020;border-radius:4px;background:linear-gradient(#c8c8c8,#b8b8b8)"></div>
<div class="t" style="left:189px;top:583px;">BOARD</div>
<div style="position:absolute;left:244px;top:581px;width:58px;height:14px;border:1px solid #202020;border-radius:4px;background:linear-gradient(#c8c8c8,#b8b8b8)"></div>
<div class="t" style="left:249px;top:583px;">DOCPAK</div>
<div style="position:absolute;left:304px;top:581px;width:58px;height:14px;border:1px solid #202020;border-radius:4px;background:linear-gradient(#c8c8c8,#b8b8b8)"></div>
<div class="t" style="left:309px;top:583px;">heed</div>
<div style="position:absolute;left:657px;top:584px;width:9px;height:11px;background:#fff;border:1px solid #000"></div>
<svg style="left:657px;top:584px" width="9" height="11" viewBox="0 0 9 11"><path d="M7 3 L2.5 5.5 L7 8" stroke="#000" stroke-width="1.6" fill="none"/></svg>
<div class="t" style="left:667px;top:583px;color:#fafafa;font-weight:bold;font-size:11px;text-shadow:0 0 1px #b0b0b0">00</div>
<div style="position:absolute;left:681px;top:584px;width:9px;height:11px;background:#fff;border:1px solid #000"></div>
<svg style="left:681px;top:584px" width="9" height="11" viewBox="0 0 9 11"><path d="M2 3 L6.5 5.5 L2 8" stroke="#000" stroke-width="1.6" fill="none"/></svg>
<div style="position:absolute;left:692px;top:582px;width:12px;height:13px;background:#f8d000;border:1px solid #000"></div>
<div class="t" style="left:693px;top:580px;font-family:Liberation Sans,sans-serif;font-weight:bold;font-size:13px;line-height:15px">S</div>
<div style="position:absolute;left:706px;top:582px;width:12px;height:13px;background:linear-gradient(90deg,#1020d0 0,#1020d0 3px,#f0e000 3px,#f0e000 7px,#1020d0 7px);border:1px solid #000"></div>
<svg style="left:706px;top:582px" width="12" height="13" viewBox="0 0 12 13"><path d="M1.5 1.5 L10.5 11.5 M10.5 1.5 L1.5 11.5" stroke="#f01010" stroke-width="1.8"/></svg>
<div style="position:absolute;left:720px;top:582px;width:15px;height:13px;background:#0000e0;border:1px solid #000"></div>
<div class="t" style="left:722px;top:582px;color:#fff">En</div>
<div style="position:absolute;left:738px;top:583px;width:8px;height:12px;background:#40a840;border-left:1px solid #d8d8d8"></div>
<div style="position:absolute;left:750px;top:581px;width:35px;height:14px;background:#0050d8;border:1px solid #000"></div>
<div class="t" style="left:753px;top:582px;color:#fff">17 34</div>
<svg style="left:790px;top:584px" width="7" height="8" viewBox="0 0 7 8"><path d="M0.5 0.5 L6 4 L0.5 7.5 Z" fill="#e0e0e0"/></svg>
</body></html>
